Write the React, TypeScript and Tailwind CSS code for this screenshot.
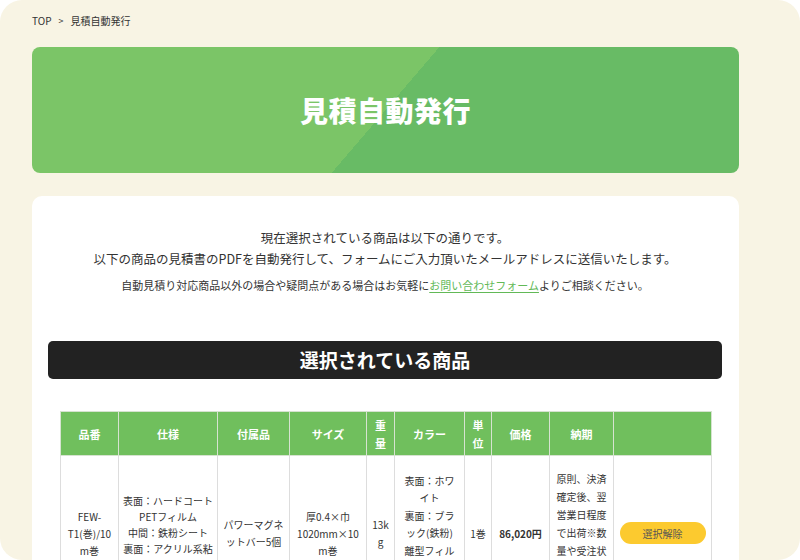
const JP = "font-['Noto_Sans_CJK_JP','Noto_Sans',sans-serif]";

type Item = {
  code: string[];
  spec: string[];
  extras: string[];
  size: string[];
  weight: string[];
  color: string[];
  unit: string;
  price: string;
  delivery: string[];
};

const items: Item[] = [
  {
    code: ["FEW-", "T1(巻)/10", "m巻"],
    spec: ["表面：ハードコート", "PETフィルム", "中間：鉄粉シート", "裏面：アクリル系粘", "着剤"],
    extras: ["パワーマグネ", "ットバー5個"],
    size: ["厚0.4×巾", "1020mm×10", "m巻"],
    weight: ["13k", "g"],
    color: ["表面：ホワ", "イト", "裏面：ブラ", "ック(鉄粉)", "離型フィル", "ム：透明", "付き"],
    unit: "1巻",
    price: "86,020円",
    delivery: [
      "原則、決済",
      "確定後、翌",
      "営業日程度",
      "で出荷※数",
      "量や受注状",
      "況により変",
      "動します。",
    ],
  },
];

const HEADERS: string[][] = [
  ["品番"],
  ["仕様"],
  ["付属品"],
  ["サイズ"],
  ["重", "量"],
  ["カラー"],
  ["単", "位"],
  ["価格"],
  ["納期"],
  [],
];

function Lines({ lines }: { lines: string[] }) {
  return (
    <>
      {lines.map((l, i) => (
        <span key={i} className="block whitespace-nowrap">
          {l}
        </span>
      ))}
    </>
  );
}

const cell = "border border-[#ddd] py-[14px]";

function ItemTable() {
  return (
    <table className="w-[651px] table-fixed border-collapse text-center">
      <colgroup>
        <col className="w-[58px]" />
        <col className="w-[99px]" />
        <col className="w-[72px]" />
        <col className="w-[77px]" />
        <col className="w-[28px]" />
        <col className="w-[70px]" />
        <col className="w-[27px]" />
        <col className="w-[58px]" />
        <col className="w-[64px]" />
        <col className="w-[98px]" />
      </colgroup>
      <thead>
        <tr className="h-[44px] bg-[#70bf5d]">
          {HEADERS.map((h, i) => (
            <th
              key={i}
              className="border border-[#d6e3d0] p-0 text-[11px] font-bold leading-[18px] text-white"
            >
              <Lines lines={h} />
            </th>
          ))}
        </tr>
      </thead>
      <tbody className="text-[10px] leading-[17px] text-[#333]">
        {items.map((it) => (
          <tr key={it.code.join("")}>
            <td className={cell}>
              <Lines lines={it.code} />
            </td>
            <td className={`${cell} leading-[16px]`}>
              <Lines lines={it.spec} />
            </td>
            <td className={cell}>
              <Lines lines={it.extras} />
            </td>
            <td className={cell}>
              <Lines lines={it.size} />
            </td>
            <td className={cell}>
              <Lines lines={it.weight} />
            </td>
            <td className={`${cell} leading-[17.5px]`}>
              <Lines lines={it.color} />
            </td>
            <td className={cell}>{it.unit}</td>
            <td className={`${cell} font-bold`}>{it.price}</td>
            <td className={`${cell} leading-[18px]`}>
              <Lines lines={it.delivery} />
            </td>
            <td className={cell}>
              <button
                type="button"
                className="mx-auto block h-[22px] w-[86px] rounded-full bg-[#fcca2f] text-[10px] text-[#555]"
              >
                選択解除
              </button>
            </td>
          </tr>
        ))}
      </tbody>
    </table>
  );
}

export default function App() {
  return (
    <div className={`h-[560px] w-[800px] overflow-hidden bg-white ${JP}`}>
      <div className="h-full overflow-hidden rounded-[22px] bg-[#f8f4e4] px-8 pt-[15px]">
        <nav className="flex items-center gap-[7px] text-[10px] leading-[12px] text-[#333]">
          <span>TOP</span>
          <span className="text-[9px]">&gt;</span>
          <span>見積自動発行</span>
        </nav>

        <div className="mt-[20px] flex h-[126px] w-[707px] items-center justify-center rounded-[8px] bg-[linear-gradient(130.6deg,#7bc567_50%,#68bb65_50%)]">
          <h1 className="text-[28px] font-black tracking-[0.5px] text-white">見積自動発行</h1>
        </div>

        <div className="mt-[23px] w-[707px] rounded-[10px] bg-white pb-10 pl-4 pr-[17px] pt-[31px]">
          <div className="text-center text-[#333]">
            <p className="text-[12.5px] leading-[21px]">
              現在選択されている商品は以下の通りです。
              <br />
              以下の商品の見積書のPDFを自動発行して、フォームにご入力頂いたメールアドレスに送信いたします。
            </p>
            <p className="mt-[6px] text-[11px] leading-[20px]">
              自動見積り対応商品以外の場合や疑問点がある場合はお気軽に
              <a href="#" className="text-[#62b957] underline underline-offset-2">
                お問い合わせフォーム
              </a>
              よりご相談ください。
            </p>
          </div>

          <h2 className="mt-[46px] flex h-[38px] items-center justify-center rounded-[5px] bg-[#222] text-[19px] font-bold text-white">
            選択されている商品
          </h2>

          <div className="mt-[32px] pl-3">
            <ItemTable />
          </div>
        </div>
      </div>
    </div>
  );
}
